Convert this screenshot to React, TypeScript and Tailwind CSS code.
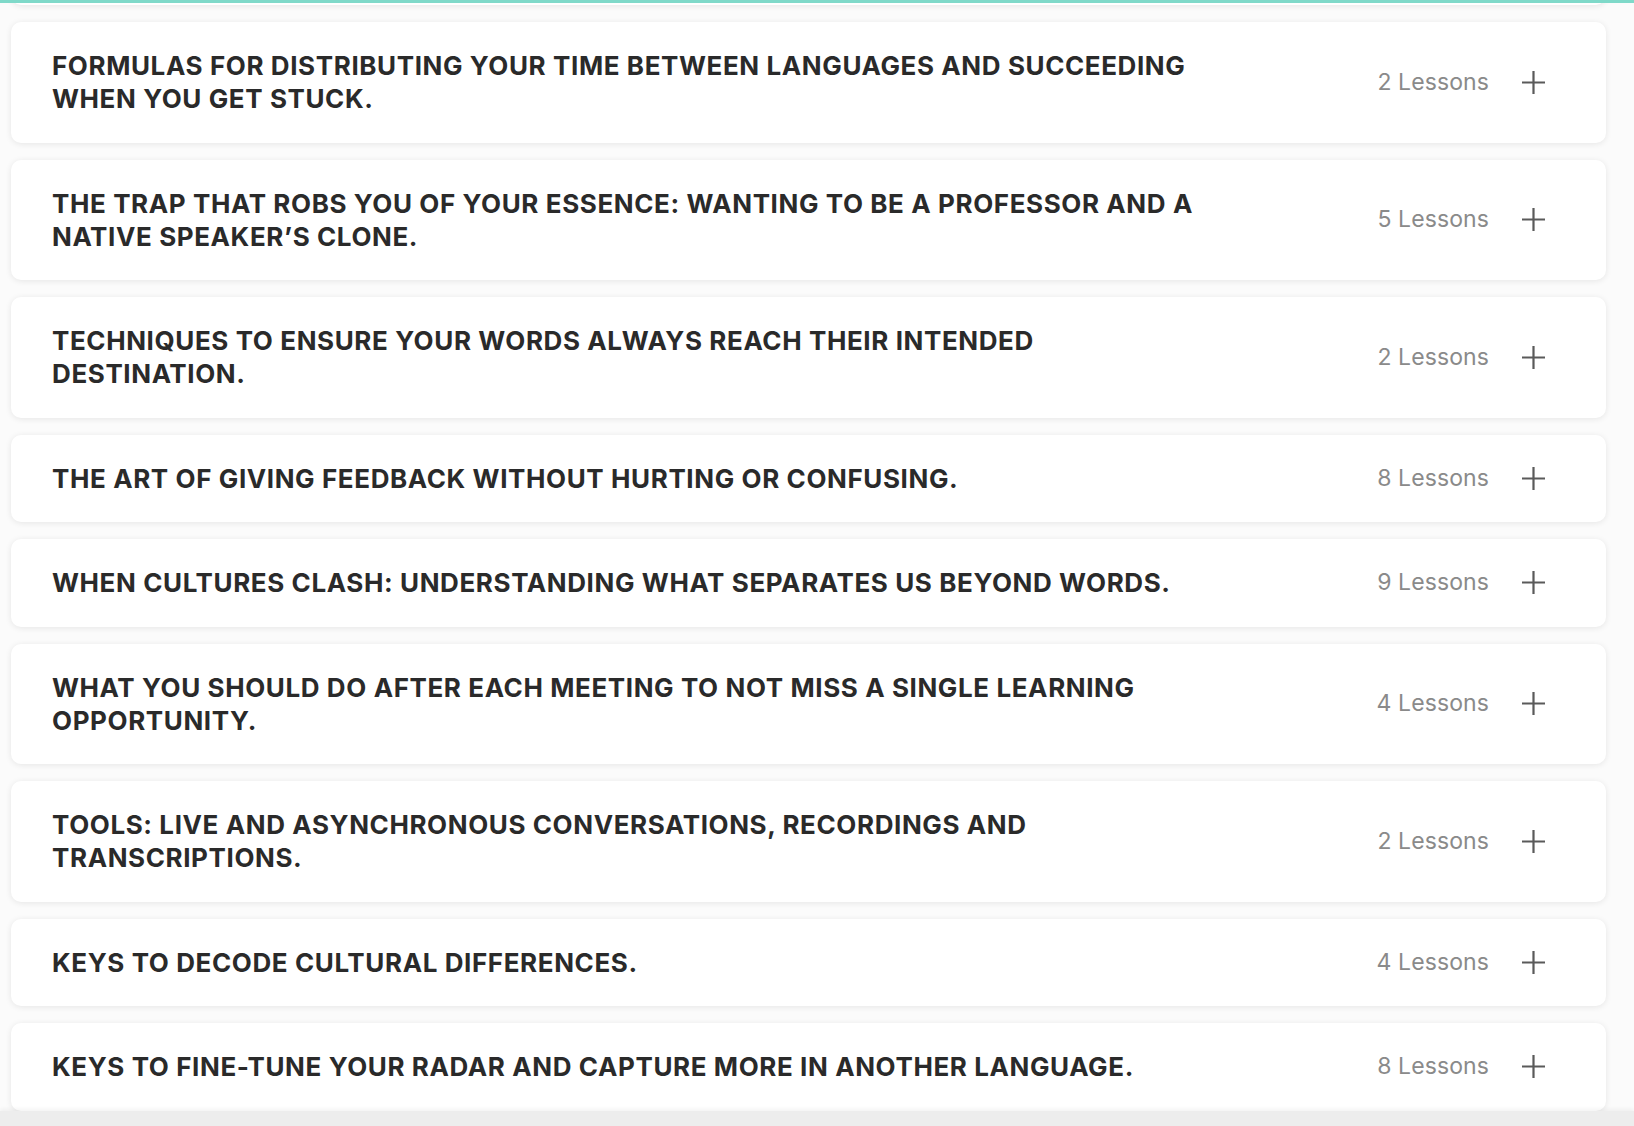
type Module = {
    title: string;
    lessons: number;
};

const modules: Module[] = [
    { title: "Formulas for distributing your time between languages and succeeding when you get stuck.", lessons: 2 },
    { title: "The trap that robs you of your essence: wanting to be a professor and a native speaker’s clone.", lessons: 5 },
    { title: "Techniques to ensure your words always reach their intended destination.", lessons: 2 },
    { title: "The art of giving feedback without hurting or confusing.", lessons: 8 },
    { title: "When cultures clash: understanding what separates us beyond words.", lessons: 9 },
    { title: "What you should do after each meeting to not miss a single learning opportunity.", lessons: 4 },
    { title: "Tools: live and asynchronous conversations, recordings and transcriptions.", lessons: 2 },
    { title: "Keys to decode cultural differences.", lessons: 4 },
    { title: "Keys to fine-tune your radar and capture more in another language.", lessons: 8 },
];

const PlusIcon = () => (
    <svg width="23" height="23" viewBox="0 0 23 23" fill="none" stroke="currentColor" strokeWidth="2.2">
        <path d="M11.5 0v23M0 11.5h23" />
    </svg>
);

const ModuleRow = ({ module }: { module: Module }) => {
    return (
        <div className="flex items-center bg-white rounded-[10px] shadow-[0_1px_6px_rgba(0,0,0,0.09)] pl-[41px] pr-[61px] py-[27.25px]">
            <h3 className="flex-1 max-w-[1172px] text-[26px] leading-[33px] font-bold uppercase text-[#2a2a2a] tracking-[0.6px]">
                {module.title}
            </h3>
            <span className="ml-auto shrink-0 text-[23px] leading-[33px] text-[#8a8a8a] tracking-[0.1px]">{module.lessons} Lessons</span>
            <button className="ml-[33px] text-[#5a5a5a]">
                <PlusIcon />
            </button>
        </div>
    );
};

export default function App() {
    return (
        <div className="relative h-screen overflow-hidden bg-[#fbfbfb] font-['Inter','Noto_Sans',sans-serif]">
            <div className="absolute top-0 left-0 right-0 h-[3px] bg-[#7fd9c9] z-10" />
            <div className="flex flex-col gap-[17px] pl-[11px] pr-[28px] -mt-[83px]">
                <div className="h-[88px] bg-white rounded-[10px] shadow-[0_1px_6px_rgba(0,0,0,0.09)]" />
                {modules.map((m, i) => (
                    <ModuleRow key={i} module={m} />
                ))}
            </div>
            <div className="pointer-events-none absolute bottom-0 left-0 right-0 h-[15px] bg-[#ededed] shadow-[0_-2px_4px_rgba(0,0,0,0.05)]" />
        </div>
    );
}
